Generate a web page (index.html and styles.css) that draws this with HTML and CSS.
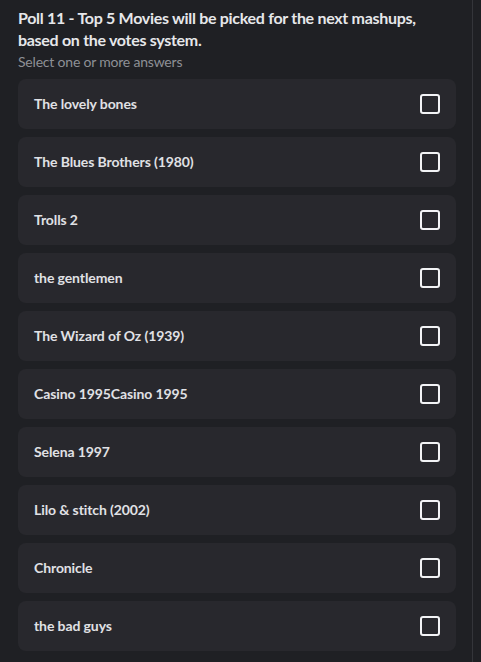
FILE: index.html
```html
<!DOCTYPE html>
<html>
<head>
<meta charset="utf-8">
<link rel="stylesheet" href="styles.css">
</head>
<body>
<div class="poll">
  <div class="question">Poll 11 - Top 5 Movies will be picked for the next mashups, based on the votes system.</div>
  <div class="hint">Select one or more answers</div>
  <div class="answers">
    <div class="answer"><span class="label">The lovely bones</span><span class="box"></span></div>
    <div class="answer"><span class="label">The Blues Brothers (1980)</span><span class="box"></span></div>
    <div class="answer"><span class="label">Trolls 2</span><span class="box"></span></div>
    <div class="answer"><span class="label">the gentlemen</span><span class="box"></span></div>
    <div class="answer"><span class="label">The Wizard of Oz (1939)</span><span class="box"></span></div>
    <div class="answer"><span class="label">Casino 1995Casino 1995</span><span class="box"></span></div>
    <div class="answer"><span class="label">Selena 1997</span><span class="box"></span></div>
    <div class="answer"><span class="label">Lilo &amp; stitch (2002)</span><span class="box"></span></div>
    <div class="answer"><span class="label">Chronicle</span><span class="box"></span></div>
    <div class="answer"><span class="label">the bad guys</span><span class="box"></span></div>
  </div>
</div>
</body>
</html>
```
FILE: styles.css
```css
html, body {
  margin: 0;
  padding: 0;
  background: #1f2024;
}
.poll {
  width: 473px;
  height: 662px;
  box-sizing: border-box;
  background: #1f2024;
  border-right: 1px solid #34353a;
  padding: 7px 16px 0 18px;
  font-family: Lato, "Noto Sans", sans-serif;
}
.question {
  color: #e6e7ea;
  font-size: 16px;
  font-weight: 700;
  line-height: 22px;
  letter-spacing: -0.3px;
}
.hint {
  color: #8e9096;
  font-size: 14px;
  line-height: 18px;
  margin-top: 2px;
  letter-spacing: -0.2px;
}
.answers {
  display: flex;
  flex-direction: column;
  gap: 8px;
  margin-top: 8px;
}
.answer {
  height: 50px;
  box-sizing: border-box;
  background: #28282d;
  border-radius: 8px;
  display: flex;
  align-items: center;
  justify-content: space-between;
  padding: 0 16px;
}
.label {
  color: #e0e1e5;
  font-size: 14px;
  font-weight: 700;
  letter-spacing: -0.1px;
  margin-top: -1px;
}
.box {
  width: 20px;
  height: 20px;
  box-sizing: border-box;
  border: 2px solid #f2f3f5;
  border-radius: 3px;
}
```
